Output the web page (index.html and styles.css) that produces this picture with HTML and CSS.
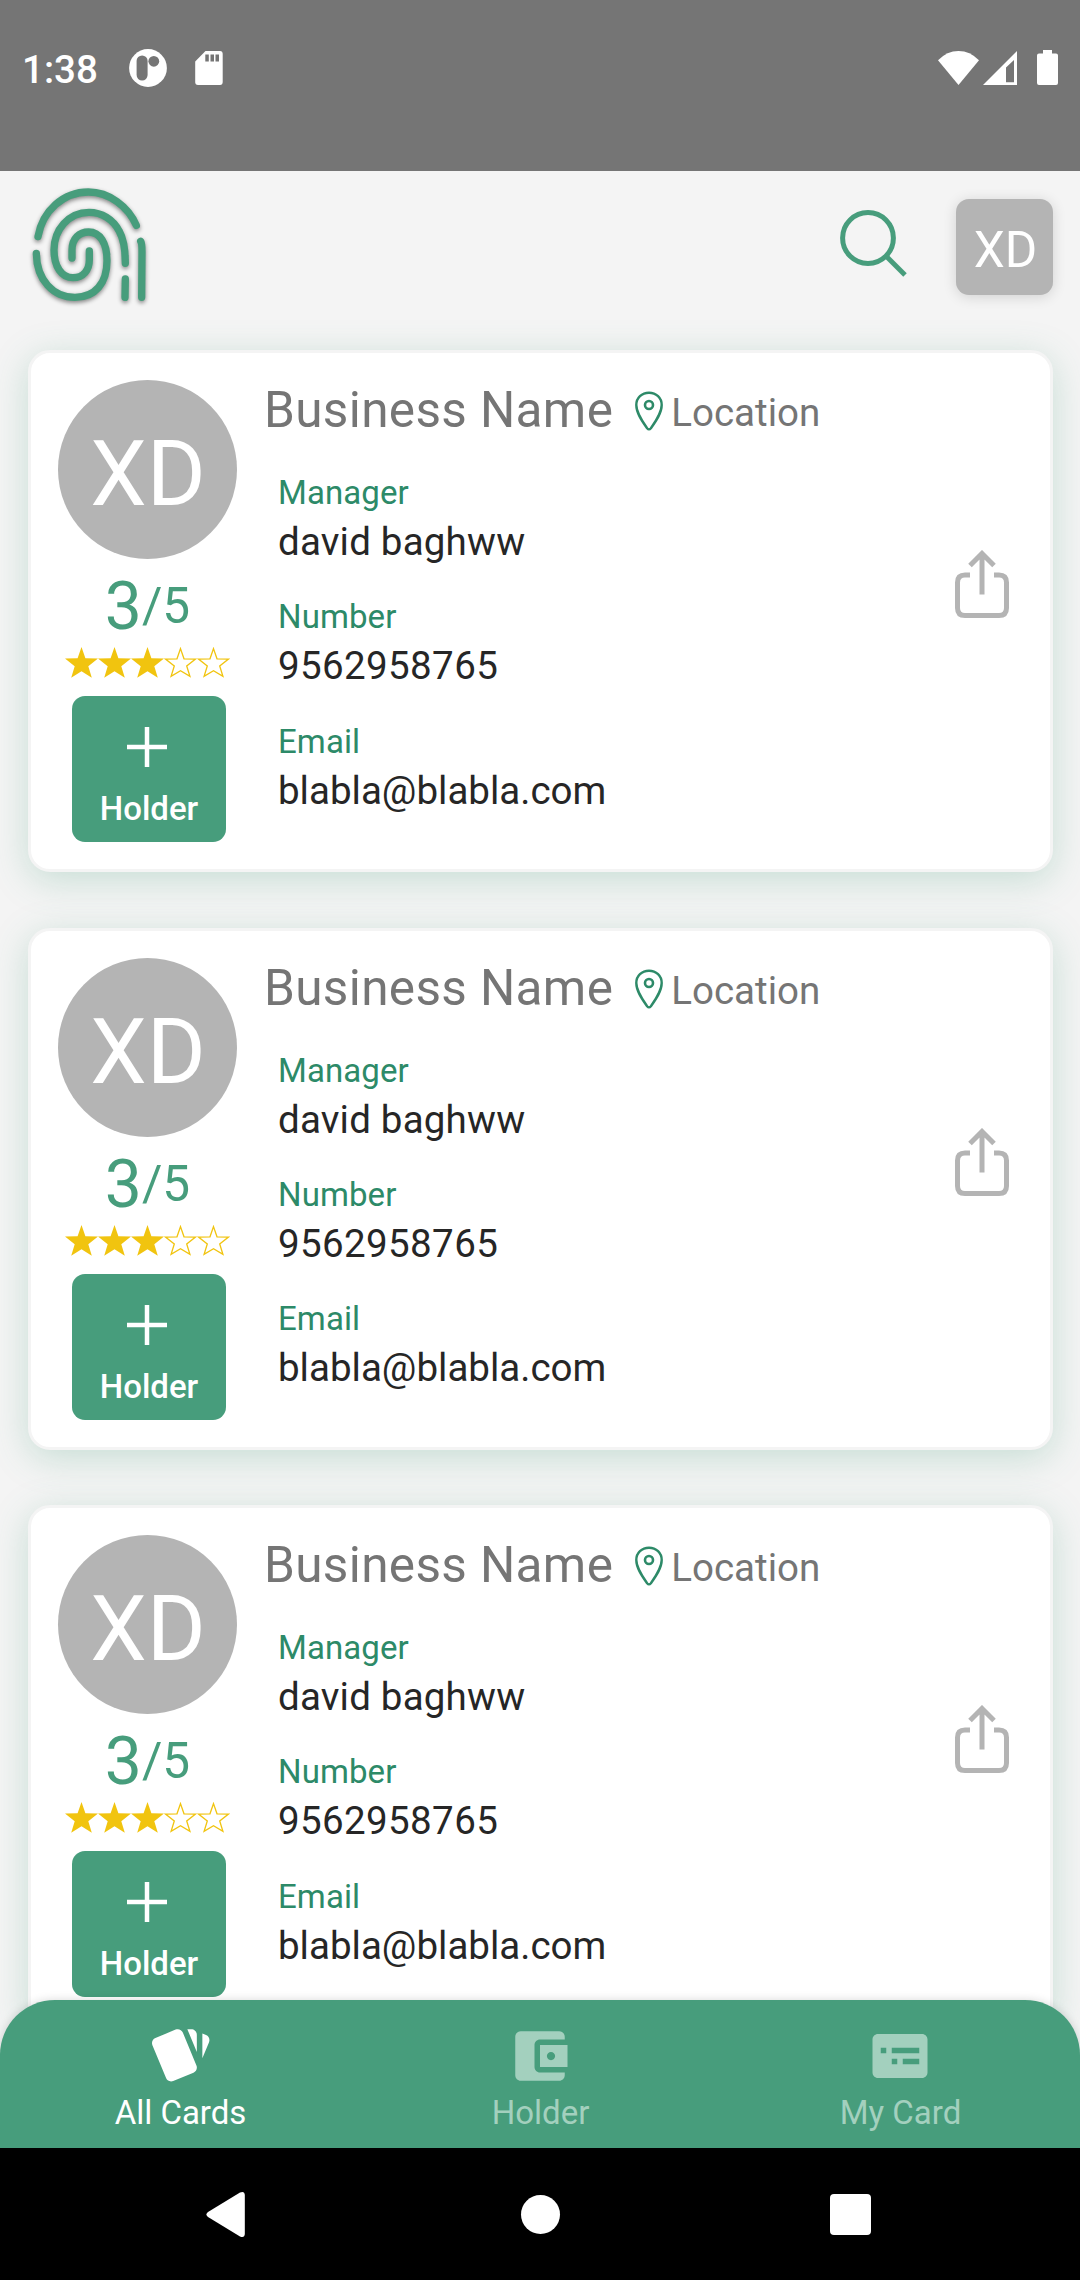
FILE: index.html
```html
<!DOCTYPE html>
<html lang="en">
<head>
<meta charset="utf-8">
<title>All Cards</title>
<link rel="stylesheet" href="styles.css">
</head>
<body>
<svg class="sprite" aria-hidden="true">
  <symbol id="star" viewBox="0 0 33 31">
    <path d="M16.5 0 20.4 11.3 33 11.5 23.3 19.2 26.8 30.7 16.5 24.3 6.2 30.7 9.7 19.2 0 11.5 12.6 11.3z"/>
  </symbol>
  <symbol id="star-outline" viewBox="0 0 33 31">
    <path fill="none" stroke="currentColor" stroke-width="1.3" d="M16.5 1.6 20 11.8 31.5 12 22.7 19 25.9 29.4 16.5 23.7 7.1 29.4 10.3 19 1.5 12 13 11.8z"/>
  </symbol>
  <symbol id="pin" viewBox="0 0 28 40">
    <g fill="none" stroke="currentColor">
      <path stroke-width="2.4" stroke-linejoin="round" d="M14 1.700C6.800 1.700 1.300 7 1.300 14c0 7.500 5 15 10.800 23.200Q14 39.500 15.900 37.200C21.700 29 26.700 21.500 26.700 14 26.700 7 21.200 1.700 14 1.700z"/>
      <circle cx="14" cy="14" r="4" stroke-width="2.6"/>
    </g>
  </symbol>
  <symbol id="share" viewBox="0 0 54 69">
    <g fill="none" stroke="currentColor" stroke-width="5">
      <path d="M15 25H10Q2.500 25 2.500 32.500V58Q2.500 65.500 10 65.500H44Q51.500 65.500 51.500 58V32.500Q51.500 25 44 25H39"/>
      <path d="M27 44.500V4M15 15.500 27 3.500 39 15.500"/>
    </g>
  </symbol>
</svg>
<div class="screen">
  <div class="status-bar">
    <span class="clock">1:38</span>
    <svg class="status-app" width="38" height="38" viewBox="0 0 38 38"><circle cx="19" cy="19" r="18.900" fill="#fff"/><rect x="7.600" y="6.500" width="11" height="25" rx="5.500" fill="#757575"/><circle cx="24.800" cy="12.300" r="5.400" fill="#757575"/></svg>
    <svg class="status-sd" width="28" height="34" viewBox="0 0 28 34"><path fill="#fff" d="M10.500 0H25Q27.700 0 27.700 3V31Q27.700 34 25 34H3Q.2 34 .2 31V10.500z"/><path fill="#757575" d="M10.300 3.400h3.500v7h-3.500zM15.500 3.400h3.500v7h-3.500zM20.500 3.400h3.500v7h-3.500z"/></svg>
    <span class="spacer"></span>
    <svg width="41" height="34" viewBox="0 0 41 34"><path fill="#fff" d="M0 9.300Q9 0 20.500 0T41 9.300L20.500 34z"/></svg>
    <svg class="status-signal" width="34" height="34" viewBox="0 0 34 34"><path fill="#fff" fill-rule="evenodd" d="M34 0V34H0zM31 9 23 16.500V31.200H31z"/></svg>
    <svg class="status-battery" width="21" height="35" viewBox="0 0 21 35"><path fill="#fff" d="M6 0H15V3.500H19Q21 3.500 21 5.500V33Q21 35 19 35H2Q0 35 0 33V5.500Q0 3.500 2 3.500H6z"/></svg>
  </div>

  <header class="app-header">
    <svg class="logo" width="120" height="123" viewBox="90 495 360 369">
      <g fill="none" stroke="#479d7c" stroke-width="22" stroke-linecap="round">
        <path d="M114 650C128 572 190 516 265 516C328 516 385 560 409 616"/>
        <path d="M376 730C376 690 370 655 358 634C340 598 305 577 267 577C205 577 162 630 162 690C162 740 185 773 219 773C250 773 268 750 268 720V693"/>
        <path d="M216 714V690C216 655 238 636 266 636C300 636 321 670 321 722C321 790 285 832 225 832C160 832 110 780 109 700"/>
        <path d="M376 777 375 832"/>
        <path d="M422 664Q426 670 426 695L425 832"/>
      </g>
    </svg>
    <span class="spacer"></span>
    <svg class="search" width="68" height="68" viewBox="0 0 68 68"><g fill="none" stroke="#479d7c" stroke-width="5"><circle cx="28" cy="28" r="25.400"/><path d="M46 46 65 65"/></g></svg>
    <div class="account">XD</div>
  </header>

  <main class="card-list">
    <article class="card">
      <div class="summary">
        <div class="avatar">XD</div>
        <div class="rating"><span class="score">3</span><span class="total">/5</span></div>
        <div class="stars"><svg><use href="#star"/></svg><svg><use href="#star"/></svg><svg><use href="#star"/></svg><svg><use href="#star-outline"/></svg><svg><use href="#star-outline"/></svg></div>
        <div class="add-holder"><svg width="40" height="40" viewBox="0 0 40 40"><path d="M20 0V40M0 20H40" stroke="#fff" stroke-width="4.500"/></svg><span>Holder</span></div>
      </div>
      <div class="details">
        <div class="title"><span class="name">Business Name</span><svg class="pin"><use href="#pin"/></svg><span class="location">Location</span></div>
        <dl class="fields">
          <div><dt>Manager</dt><dd class="manager">david baghww</dd></div>
          <div><dt>Number</dt><dd class="number">9562958765</dd></div>
          <div><dt>Email</dt><dd>blabla@blabla.com</dd></div>
        </dl>
      </div>
      <svg class="share"><use href="#share"/></svg>
    </article>

    <article class="card">
      <div class="summary">
        <div class="avatar">XD</div>
        <div class="rating"><span class="score">3</span><span class="total">/5</span></div>
        <div class="stars"><svg><use href="#star"/></svg><svg><use href="#star"/></svg><svg><use href="#star"/></svg><svg><use href="#star-outline"/></svg><svg><use href="#star-outline"/></svg></div>
        <div class="add-holder"><svg width="40" height="40" viewBox="0 0 40 40"><path d="M20 0V40M0 20H40" stroke="#fff" stroke-width="4.500"/></svg><span>Holder</span></div>
      </div>
      <div class="details">
        <div class="title"><span class="name">Business Name</span><svg class="pin"><use href="#pin"/></svg><span class="location">Location</span></div>
        <dl class="fields">
          <div><dt>Manager</dt><dd class="manager">david baghww</dd></div>
          <div><dt>Number</dt><dd class="number">9562958765</dd></div>
          <div><dt>Email</dt><dd>blabla@blabla.com</dd></div>
        </dl>
      </div>
      <svg class="share"><use href="#share"/></svg>
    </article>

    <article class="card">
      <div class="summary">
        <div class="avatar">XD</div>
        <div class="rating"><span class="score">3</span><span class="total">/5</span></div>
        <div class="stars"><svg><use href="#star"/></svg><svg><use href="#star"/></svg><svg><use href="#star"/></svg><svg><use href="#star-outline"/></svg><svg><use href="#star-outline"/></svg></div>
        <div class="add-holder"><svg width="40" height="40" viewBox="0 0 40 40"><path d="M20 0V40M0 20H40" stroke="#fff" stroke-width="4.500"/></svg><span>Holder</span></div>
      </div>
      <div class="details">
        <div class="title"><span class="name">Business Name</span><svg class="pin"><use href="#pin"/></svg><span class="location">Location</span></div>
        <dl class="fields">
          <div><dt>Manager</dt><dd class="manager">david baghww</dd></div>
          <div><dt>Number</dt><dd class="number">9562958765</dd></div>
          <div><dt>Email</dt><dd>blabla@blabla.com</dd></div>
        </dl>
      </div>
      <svg class="share"><use href="#share"/></svg>
    </article>
  </main>

  <nav class="tab-bar">
    <div class="tab active">
      <svg width="66" height="66" viewBox="0 0 24 24"><g fill="currentColor" transform="rotate(180 12 12)"><path d="M2.530 19.650l1.340.560v-9.030l-2.430 5.860c-.410 1.020.080 2.190 1.090 2.610zM22.030 15.950L17.070 3.980c-.310-.750-1.040-1.210-1.810-1.230-.260 0-.530.040-.790.150L7.100 5.950c-.750.310-1.210 1.030-1.230 1.800-.010.270.040.540.150.800l4.960 11.970c.310.760 1.050 1.220 1.830 1.230.260 0 .520-.050.770-.150l7.360-3.050c1.020-.420 1.510-1.590 1.090-2.600zM5.880 19.750c0 1.100.900 2 2 2h1.450l-3.450-8.340v6.340z"/></g></svg>
      <span>All Cards</span>
    </div>
    <div class="tab">
      <svg width="66" height="66" viewBox="0 0 24 24"><path fill="currentColor" fill-rule="evenodd" d="M21 18v1c0 1.100-.9 2-2 2H5c-1.110 0-2-.9-2-2V5c0-1.100.89-2 2-2h14c1.100 0 2 .9 2 2v1h-9c-1.110 0-2 .9-2 2v8c0 1.100.89 2 2 2h9zM12 16h10V8H12v8zM16 13.500c-.83 0-1.500-.67-1.500-1.500s.67-1.500 1.500-1.500 1.500.67 1.500 1.500-.67 1.500-1.500 1.500z"/></svg>
      <span>Holder</span>
    </div>
    <div class="tab">
      <svg width="66" height="66" viewBox="0 0 24 24"><path fill="currentColor" fill-rule="evenodd" d="M4 4H20c1.100 0 2 .9 2 2V18c0 1.100-.9 2-2 2H4c-1.100 0-2-.9-2-2V6c0-1.100.9-2 2-2zM5 9V11H7V9zM9 9V11H19V9zM9 13V15H11V13zM13 13V15H19V13z"/></svg>
      <span>My Card</span>
    </div>
  </nav>

  <div class="system-nav">
    <svg width="39" height="45" viewBox="0 0 39 45"><path fill="#fff" d="M34 .6Q38.500-1.300 38.800 3V42Q38.500 46.300 34 44.400L2 25Q-1.200 22.500 2 20z"/></svg>
    <span class="home"></span>
    <span class="recent"></span>
  </div>
</div>
</body>
</html>
```
FILE: styles.css
```css
* { box-sizing: border-box; }

body {
  margin: 0;
  font-family: Roboto, "Noto Sans", sans-serif;
  background: #f4f4f4;
}

svg { display: block; flex: none; }
.sprite { display: none; }
.spacer { flex: 1; }

.screen {
  width: 1080px;
  height: 2280px;
  display: flex;
  flex-direction: column;
  overflow: hidden;
}

/* Status bar */
.status-bar {
  flex: none;
  height: 171px;
  padding: 0 22px 36px 22px;
  display: flex;
  align-items: center;
  background: #757575;
  color: #fff;
}
.clock {
  width: 107px;
  margin-top: 4px;
  font-size: 38.5px;
  font-weight: 500;
  line-height: 46px;
}
.status-sd { margin-left: 28px; }
.status-signal { margin-left: 4px; }
.status-battery { margin-left: 20px; }

/* Header */
.app-header {
  flex: none;
  height: 149px;
  padding: 14px 27px 0 30px;
  display: flex;
  align-items: flex-start;
}
.logo { filter: drop-shadow(0 2px 2px rgba(0, 0, 0, .45)); }
.search { margin: 25px 48px 0 0; }
.account {
  width: 97px;
  height: 96px;
  margin-top: 14px;
  padding-left: 2px;
  border-radius: 13px;
  background: #b4b4b4;
  box-shadow: 0 2px 14px rgba(0, 0, 0, .14);
  color: #fff;
  font-size: 49.5px;
  line-height: 102px;
  text-align: center;
}

/* Card list */
.card-list {
  flex: 1;
  min-height: 0;
  margin-bottom: -60px;
  padding: 30px 27px 0 28px;
  display: flex;
  flex-direction: column;
  gap: 55.5px;
  overflow: hidden;
}
.card {
  flex: none;
  height: 522px;
  padding: 27px 41px 27px 27px;
  display: flex;
  align-items: flex-start;
  border: 3px solid #f4f4f4;
  border-radius: 22px;
  background: #fff;
  box-shadow: 0 8px 36px rgba(71, 157, 124, .26);
}

.summary {
  width: 179px;
  display: flex;
  flex-direction: column;
  align-items: center;
}
.avatar {
  width: 179px;
  height: 179px;
  padding-left: 1px;
  border-radius: 50%;
  background: #b4b4b4;
  color: #fff;
  font-size: 90px;
  line-height: 189px;
  text-align: center;
}
.rating {
  margin-top: 7px;
  display: flex;
  color: #479d7c;
  line-height: 81px;
}
.score { font-size: 66px; }
.total { font-size: 49.5px; }
.stars {
  display: flex;
  color: #f1c40f;
}
.stars svg { width: 33px; height: 31px; fill: currentColor; }
.add-holder {
  width: 154px;
  height: 146px;
  margin: 18px 0 0 3px;
  padding: 31px 3px 0 0;
  display: flex;
  flex-direction: column;
  align-items: center;
  border-radius: 13px;
  background: #479d7c;
  color: #fff;
}
.add-holder svg { margin-right: 1px; }
.add-holder span {
  margin: 22px 0 0 3px;
  font-size: 33px;
  font-weight: 500;
  line-height: 40px;
}

.details { flex: 1; margin-left: 27px; }
.title { display: flex; align-items: flex-start; color: #757575; }
.name { font-size: 49.5px; line-height: 60px; letter-spacing: .36px; }
.pin { width: 28px; height: 40px; margin: 11px 8px 0 22px; color: #2d8a68; }
.location { font-size: 38.5px; line-height: 66px; height: 60px; }
.fields {
  margin: 33px 0 0 14px;
  display: flex;
  flex-direction: column;
  gap: 30.4px;
}
.fields dt { color: #2d8a68; font-size: 33px; line-height: 40px; letter-spacing: .1px; }
.fields dd { margin: 4px 0 0; color: #262626; font-size: 38.5px; line-height: 50px; }
.fields .manager { letter-spacing: .2px; }
.fields .number { letter-spacing: .38px; }
.share { width: 54px; height: 69px; margin-top: 170px; color: #b4b4b4; }

/* Bottom tabs */
.tab-bar {
  position: relative;
  flex: none;
  height: 148px;
  display: grid;
  grid-template-columns: repeat(3, 1fr);
  border-radius: 55px 55px 0 0;
  background: #479d7c;
  box-shadow: 0 0 10px rgba(0, 0, 0, .15);
}
.tab {
  padding-top: 23px;
  display: flex;
  flex-direction: column;
  align-items: center;
  color: #a3d0be;
  font-size: 33px;
  line-height: 40px;
}
.tab span { margin: 4px 0 0 1px; }
.tab.active { color: #fff; }

/* System navigation */
.system-nav {
  position: relative;
  flex: none;
  height: 132px;
  padding: 0 209px 0 206px;
  display: flex;
  align-items: center;
  justify-content: space-between;
  background: #000;
}
.home { width: 39px; height: 39px; margin-left: 6px; border-radius: 50%; background: #fff; }
.recent { width: 41px; height: 41px; border-radius: 4px; background: #fff; }
```
